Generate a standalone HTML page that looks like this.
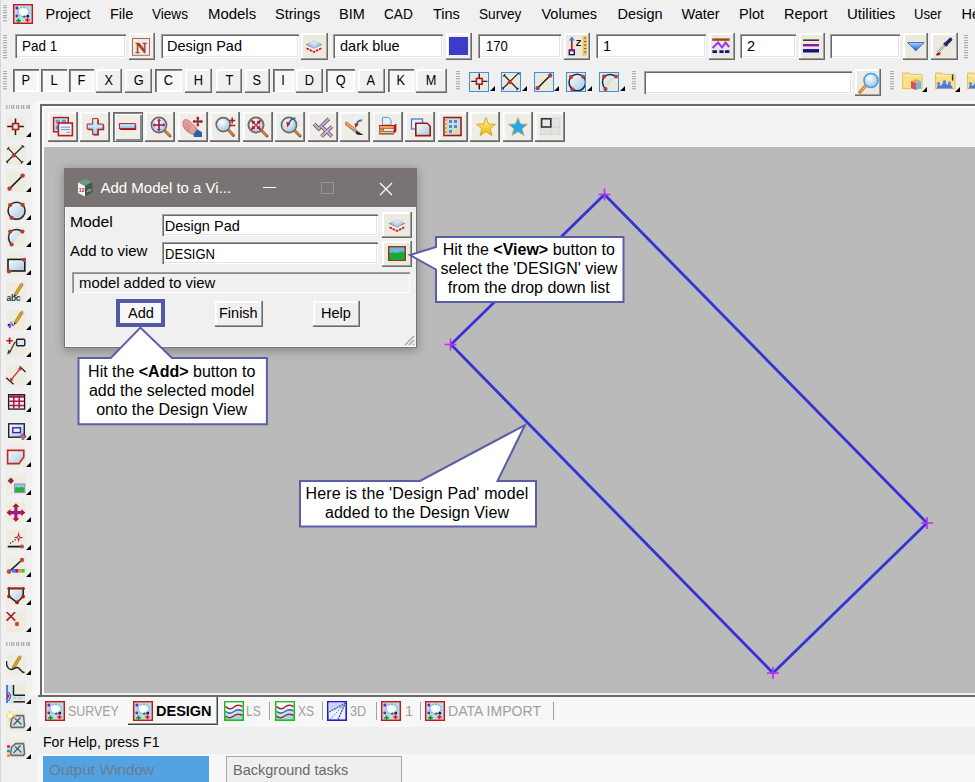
<!DOCTYPE html>
<html><head><meta charset="utf-8">
<style>
*{box-sizing:border-box;}
html,body{margin:0;padding:0;}
body{width:975px;height:782px;overflow:hidden;position:relative;background:#f0f0f0;font-family:"Liberation Sans",sans-serif;color:#000;}
.a{position:absolute;}
.t{position:absolute;white-space:nowrap;font-size:14.5px;line-height:16px;}
.grip{position:absolute;width:4px;background:repeating-linear-gradient(#b0b0b0 0 1px,#dadada 1px 1.5px,transparent 1.5px 2.5px);}
.griph{position:absolute;height:3.5px;background:repeating-linear-gradient(90deg,#b0b0b0 0 1px,#d8d8d8 1px 1.6px,transparent 1.6px 2.5px);}
.inp{position:absolute;background:#fff;box-shadow:inset 1px 1px 0 #a0a0a0,inset 2px 2px 0 #696969,inset -1px -1px 0 #fff,inset -2px -2px 0 #e3e3e3;}
.rb{position:absolute;background:#f0f0f0;box-shadow:inset -1px -1px 0 #696969,inset -2px -2px 0 #a0a0a0,inset 1px 1px 0 #fff,inset 2px 2px 0 #fff;}
.sb{position:absolute;background:#f7f7f7;box-shadow:inset 1px 1px 0 #696969,inset 2px 2px 0 #8a8a8a,inset -1px -1px 0 #fff,inset -2px -2px 0 #fff;}
.lb{font-size:14.5px;line-height:16px;text-align:center;white-space:nowrap;}
.ic{position:absolute;}
.tri{position:absolute;width:0;height:0;border-left:6px solid transparent;border-bottom:6px solid #000;}
.vb{position:absolute;width:30px;height:30px;background:#efede7;box-shadow:inset -1px -1px 0 #696969,inset -2px -2px 0 #8a8a8a,inset 1px 1px 0 #fff,inset 2px 2px 0 #f8f8f8;}
.vb.pressed{box-shadow:inset 0 0 0 1px #6a6a6a,inset 1px 1px 0 1px #8a8a8a,inset 2px 2px 0 1px #fff,inset -2px -2px 0 1px #8a8a8a;}
.co{position:absolute;font-size:16px;line-height:19px;text-align:center;white-space:nowrap;}
</style></head><body>
<svg width="0" height="0" style="position:absolute;left:0;top:0">
<defs>
<linearGradient id="gb" x1="0" y1="0" x2="1" y2="1"><stop offset="0" stop-color="#fbfdff"/><stop offset="1" stop-color="#a8c8dc"/></linearGradient>
<linearGradient id="gb2" x1="0" y1="0" x2="0" y2="1"><stop offset="0" stop-color="#d8f0ff"/><stop offset="1" stop-color="#88c0e8"/></linearGradient>
<linearGradient id="gtri" x1="0" y1="0" x2="0" y2="1"><stop offset="0" stop-color="#a8d0ff"/><stop offset="1" stop-color="#2060d0"/></linearGradient>
<radialGradient id="gmag" cx="0.4" cy="0.35" r="0.7"><stop offset="0" stop-color="#ffffff"/><stop offset="1" stop-color="#98c0dc"/></radialGradient>
<linearGradient id="gstar" x1="0" y1="0" x2="0" y2="1"><stop offset="0" stop-color="#fff3a0"/><stop offset="1" stop-color="#f0b800"/></linearGradient>

<symbol id="app" viewBox="0 0 20 20">
<rect x="0.7" y="0.7" width="18.6" height="18.6" fill="#b8dde4" stroke="#d01414" stroke-width="1.4"/>
<path d="M5 5.5 C7.5 2.5 13 2.5 15.5 5.5 C17 8.5 15 12.5 10.5 12.8 C7 13 4.5 9.5 5 5.5Z" fill="#f4f8fa" stroke="#7ab4dc" stroke-width="1.4" stroke-dasharray="2 0.8"/>
<circle cx="10" cy="8" r="2.5" fill="#fff"/>
<circle cx="3.8" cy="4" r="1.4" fill="#8a1aa0"/>
<circle cx="3.8" cy="12" r="1.4" fill="#8a1aa0"/>
<circle cx="11.3" cy="12.6" r="1.2" fill="#1a7a2a"/>
<circle cx="14.8" cy="12.2" r="1.4" fill="#10188c"/>
<path d="M5.5 14.4v4.6M3.2 16.7h4.6" stroke="#109020" stroke-width="1.6"/>
<path d="M14.5 13.8v4.4M12.3 16h4.4" stroke="#ff1010" stroke-width="1.6"/>
</symbol>

<symbol id="wave" viewBox="0 0 20 20">
<rect x="0.8" y="0.8" width="18.4" height="18.4" fill="#a8d4e4" stroke="#18c018" stroke-width="1.6"/>
<path d="M1.6 1.6 H18.4 V5.5 C15 3.5 12 4 10 6 C8 8 5 8.5 1.6 5.5Z" fill="#fafcff"/>
<path d="M1.6 6 C5 9.5 8 8.5 10 6.5 C12 4.5 15 4 18.4 6.2 V9.6 C15 8 12 8.5 10 10 C8 11.5 5 13 1.6 10.4Z" fill="#eef4fa"/>
<path d="M1.6 11 C5 14 8 12.5 10 11 C12 9.5 15 9 18.4 10.5 V13.5 C15 12.5 12 13 10 14.5 C8 16 5 17.5 1.6 14.5Z" fill="#c8e2f0"/>
<path d="M1.6 5.5 C5 9 8 8 10 6 C12 4 15 3.5 18.4 5.5" fill="none" stroke="#a82828" stroke-width="1.5"/>
<path d="M1.6 10.2 C5 13.5 8 12 10 10.5 C12 9 15 8.2 18.4 9.8" fill="none" stroke="#3a70c0" stroke-width="1.5"/>
<path d="M1.6 15 C5 18 8 16.5 10 14.8 C12 13 15 12.6 18.4 14.2" fill="none" stroke="#a82828" stroke-width="1.5"/>
</symbol>

<symbol id="d3" viewBox="0 0 20 20">
<rect x="0.8" y="0.8" width="18.4" height="18.4" fill="#eef0fb" stroke="#1c1cd0" stroke-width="1.6"/>
<path d="M1.6 1.6H18.4V5L1.6 11Z" fill="#d4d0f4"/>
<path d="M2 11 L18.5 2" stroke="#2a7a9a" stroke-width="1.3" stroke-dasharray="2 0.8"/>
<path d="M3 18.5 L18.5 2" stroke="#3c6a9a" stroke-width="1" stroke-dasharray="1.5 1.5"/>
<path d="M11 18.5 L18.5 2" stroke="#3c3c9a" stroke-width="1.2" stroke-dasharray="2 0.8"/>
</symbol>

<symbol id="cube" viewBox="0 0 16 19">
<path d="M1 4.5 L8.5 1 L15.5 4 L8 8Z" fill="#6a9a80"/>
<path d="M1 4.5 L8 8 L8 18.5 L1 15Z" fill="#f4f4f4"/>
<path d="M8 8 L15.5 4 L15.5 14.5 L8 18.5Z" fill="#3e5e4a"/>
<text x="1.8" y="13.5" font-size="5.5" font-family="Liberation Sans" font-weight="bold" fill="#d02030">12</text>
<path d="M10 14 l2-3 M12 14 l2-3" stroke="#c8e0d0" stroke-width="0.8"/>
</symbol>

<symbol id="layers" viewBox="0 0 20 20">
<path d="M1.5 8.5 L10 5 L18.5 8.5 L10 12.5Z" fill="#7a90a8"/>
<path d="M3.5 8.2 L10 4 L16.5 8.2 L10 12Z" fill="#b8cde6"/>
<path d="M6 7 L10 4.6 L14 7 L10 9.6Z" fill="#d4e2f2"/>
<path d="M2.5 11 L10 14.8 L17.5 11" fill="none" stroke="#f4f8fc" stroke-width="1"/>
<path d="M2.5 12.2 L10 16 L17.5 12.2" fill="none" stroke="#e01414" stroke-width="1.7" stroke-dasharray="2.6 0.9"/>
</symbol>

<symbol id="imgbtn" viewBox="0 0 18 15">
<rect x="0.8" y="0.8" width="16.4" height="13.4" fill="#1cb43c" stroke="#9a3418" stroke-width="1.6"/>
<path d="M1.6 1.6H16.4V6 C12 4 10 8 6 6.5 C4 5.8 3 7 1.6 7.5Z" fill="#6ab8e0"/>
<path d="M1.6 8 C5 6 8 9 12 7 C14 6 15.5 7 16.4 7.5V14H1.6Z" fill="#1aa838"/>
</symbol>
</defs>
</svg>
<svg width="0" height="0" style="position:absolute;left:0;top:0">
<defs>
<symbol id="L_cross" viewBox="0 0 20 20">
<path d="M1.2 9.6H17.8M9.5 1.6V18" stroke="#1e1e1e" stroke-width="1.5"/>
<rect x="6.6" y="6.6" width="5.9" height="5.9" fill="#d6eaf6" stroke="#b41818" stroke-width="1.6"/>
</symbol>
<symbol id="L_xpt" viewBox="0 0 20 20">
<path d="M0.8 17 L17 1.2 M2.2 3.4 L16 17.4" stroke="#2a2a2a" stroke-width="1.3"/>
<path d="M-0.2 15.8 L2 18.2 M15.8 0 L18.2 2.4 M1 4.6 L3.4 2.2 M14.8 18.6 L17.2 16.2" stroke="#2a2a2a" stroke-width="1.1"/>
<circle cx="7.8" cy="10.5" r="2.1" fill="#b83a3a"/>
</symbol>
<symbol id="L_line" viewBox="0 0 20 20">
<path d="M3.6 16.6 L16.6 3.6" stroke="#1e1e1e" stroke-width="1.6"/>
<circle cx="16.6" cy="3.6" r="2.2" fill="#b83a3a"/><circle cx="3.6" cy="16.6" r="2.2" fill="#b83a3a"/>
</symbol>
<symbol id="L_circle" viewBox="0 0 20 20">
<circle cx="10.6" cy="10.8" r="8.5" fill="url(#gb)" stroke="#2a2a2a" stroke-width="1.6"/>
<circle cx="4.2" cy="5" r="2.1" fill="#b83a3a"/><circle cx="16.6" cy="4.8" r="2.1" fill="#b83a3a"/><circle cx="5.6" cy="17.8" r="2.1" fill="#b83a3a"/>
</symbol>
<symbol id="L_arc" viewBox="0 0 20 20">
<path d="M5.6 17.5 C2 14 1.5 8 4.5 5 C7.5 1.5 13 2 16.2 4.6 L5.6 17.5Z" fill="url(#gb)"/>
<path d="M5.6 17.5 C2 14 1.5 8 4.5 5 C7.5 1.5 13 2 16.2 4.6" fill="none" stroke="#2a2a2a" stroke-width="1.6"/>
<circle cx="4.2" cy="4.6" r="2.1" fill="#b83a3a"/><circle cx="16.4" cy="4.6" r="2.1" fill="#b83a3a"/><circle cx="5.6" cy="17.5" r="2.1" fill="#b83a3a"/>
</symbol>
<symbol id="L_rect" viewBox="0 0 20 20">
<rect x="2" y="4.4" width="16.8" height="11.6" fill="url(#gb)" stroke="#1e1e1e" stroke-width="1.6"/>
<circle cx="18.3" cy="4.9" r="2.1" fill="#b83a3a"/><circle cx="2.9" cy="16.4" r="2.1" fill="#b83a3a"/>
</symbol>
<symbol id="L_abc" viewBox="0 0 20 20">
<path d="M8 12.5 L14.5 2 L17 3.2 L10.3 13.5Z" fill="#e0a818" stroke="#806010" stroke-width="0.6"/>
<path d="M14.5 2 L15.3 0.6 L17.8 1.8 L17 3.2Z" fill="#e88890"/>
<path d="M8 12.5 L10.3 13.5 L7.8 15Z" fill="#303030"/>
<text x="0.6" y="19" font-size="8.6" font-family="Liberation Sans" font-weight="bold" fill="#283c5a" letter-spacing="-0.4">abc</text>
</symbol>
<symbol id="L_paint" viewBox="0 0 20 20">
<path d="M8 12.5 L14.5 2 L17 3.2 L10.3 13.5Z" fill="#e0a818" stroke="#806010" stroke-width="0.6"/>
<path d="M14.5 2 L15.3 0.6 L17.8 1.8 L17 3.2Z" fill="#e88890"/>
<path d="M8 12.5 L10.3 13.5 L7.8 15Z" fill="#303030"/>
<path d="M4.5 14 C3 11.5 6 10.5 6.8 12.8Z" fill="#40a8f0"/>
<path d="M4.5 14 C1.5 13 0.5 16 3 16.5Z" fill="#1a1ab0"/>
<path d="M4.5 14 C6 16.5 4 19.5 2.8 17.2Z" fill="#a020c0"/>
<path d="M4.5 14 C7 13 9 15.5 7 16.5Z" fill="#9040f0"/>
</symbol>
<symbol id="L_plusbox" viewBox="0 0 20 20">
<path d="M3.6 0.6V7M0.4 3.8H6.8" stroke="#b01830" stroke-width="1.6"/>
<rect x="10.6" y="2.2" width="8.2" height="6.6" rx="1" fill="#d6eaf6" stroke="#222" stroke-width="1.4"/>
<path d="M10.6 5.4H8.8 L3 16.5" fill="none" stroke="#444" stroke-width="1.4"/>
<path d="M1.2 17.8 L2.2 12.8 L5.4 14.6Z" fill="#444"/>
</symbol>
<symbol id="L_ruler" viewBox="0 0 20 20">
<path d="M0.2 12.8 L7.6 19.2 M13.6 1.4 L19.6 7" stroke="#2a2a2a" stroke-width="1.4"/>
<path d="M4.6 15.4 L14.8 3" stroke="#d02a3a" stroke-width="1.2"/>
<path d="M3.8 16.4 L4.4 12.6 L7.4 15.2Z M15.6 2 L15 5.8 L12 3.2Z" fill="#d02a3a"/>
</symbol>
<symbol id="L_table" viewBox="0 0 20 20">
<rect x="2.6" y="2.7" width="16" height="14.4" fill="#e8eef4" stroke="#1a1a1a" stroke-width="1.3"/>
<path d="M3.3 5H18M3.3 9.3H18M3.3 13.4H18M7.8 3.4V16.4M13.2 3.4V16.4" stroke="#b01830" stroke-width="1.5"/>
<rect x="3.3" y="3.4" width="14.7" height="1.6" fill="#b01830"/>
</symbol>
<symbol id="L_winmag" viewBox="0 0 20 20">
<rect x="2.7" y="3.8" width="15.6" height="13.4" fill="url(#gb)" stroke="#222" stroke-width="1.4"/>
<rect x="6.8" y="7.8" width="7.6" height="4.8" fill="#f0f4f8" stroke="#2828c0" stroke-width="1.4"/>
<path d="M17 13.5V19.8M13.8 16.6H20.2" stroke="#c82828" stroke-width="2.6"/>
<path d="M17 14.2V19M14.5 16.6H19.4" stroke="#40a0f0" stroke-width="1.3"/>
</symbol>
<symbol id="L_shape" viewBox="0 0 20 20">
<path d="M1.6 3.4 H17.8 V10 L13 16.6 H1.6Z" fill="url(#gb)" stroke="#c02828" stroke-width="1.6"/>
</symbol>
<symbol id="L_imgpt" viewBox="0 0 20 20">
<path d="M4.8 2.5 L8 5.7 L4.8 8.9 L1.6 5.7Z" fill="#c01818"/>
<rect x="4" y="4" width="1.6" height="3.6" fill="#2050a0"/>
<rect x="8.6" y="9" width="10.2" height="8.6" fill="#8cc8f0" stroke="#8a8ad8" stroke-width="1"/>
<path d="M9.1 16.9V13 C11 11 12 13 13.5 12.5 C15 12 16 11.5 18.3 13 V16.9Z" fill="#30b030"/>
</symbol>
<symbol id="L_move" viewBox="0 0 20 20">
<path d="M9.9 1.2 L13.4 5 H11.4 V9 H15.4 V7 L19.2 10.6 L15.4 14.2 V12.2 H11.4 V16.2 H13.4 L9.9 19.8 L6.4 16.2 H8.4 V12.2 H4.4 V14.2 L0.6 10.6 L4.4 7 V9 H8.4 V5 H6.4Z" fill="#b80e20"/>
<path d="M9.9 4.5V16.8M3.6 10.6H16.2" stroke="#9020a0" stroke-width="2"/>
</symbol>
<symbol id="L_stake" viewBox="0 0 20 20">
<path d="M12.6 1.6 L13.6 6.4 L17.6 7.4 L13.6 8.4 L12.6 12.6 L11.6 8.4 L7.8 7.4 L11.6 6.4Z" fill="#b81a2a"/>
<circle cx="12.6" cy="7.4" r="1" fill="#f0e0d0"/>
<path d="M9.6 9.6 L3.2 14" stroke="#333" stroke-width="1.3" stroke-dasharray="1.2 1.6"/>
<path d="M1.8 16.6 H16" stroke="#1e1e1e" stroke-width="1.8"/>
<circle cx="16" cy="16.6" r="2" fill="#b84a4a"/>
</symbol>
<symbol id="L_cline" viewBox="0 0 20 20">
<path d="M3.6 14.2 L16 3" stroke="#1e1e1e" stroke-width="1.6"/>
<circle cx="16" cy="3" r="2.2" fill="#b84a4a"/><circle cx="3" cy="14.6" r="2.3" fill="#b84a4a"/>
<rect x="6" y="12" width="3.2" height="3.6" fill="#1e90ff"/><rect x="9.2" y="12" width="3.2" height="3.6" fill="#8a18a0"/><rect x="12.4" y="12" width="3.2" height="3.6" fill="#ff8030"/><rect x="15.6" y="12" width="3" height="3.6" fill="#18e018"/>
</symbol>
<symbol id="L_shield" viewBox="0 0 20 20">
<path d="M3 3.5 H17.2 V11.5 L11 17.6 L3 11.4Z" fill="url(#gb)" stroke="#1e1e1e" stroke-width="1.5"/>
<path d="M2.2 3.4 H18" stroke="#b01818" stroke-width="1.8"/>
<circle cx="3" cy="11.4" r="1.8" fill="#b01818"/><circle cx="17.2" cy="11.6" r="1.8" fill="#b01818"/><circle cx="11" cy="17.4" r="1.9" fill="#b01818"/>
<circle cx="2.8" cy="3.4" r="1.5" fill="#b01818"/><circle cx="17.4" cy="3.4" r="1.5" fill="#b01818"/>
</symbol>
<symbol id="L_xpt2" viewBox="0 0 20 20">
<path d="M0.6 0 L9.2 8.6 M9.2 0 L0.6 8.6" stroke="#b01830" stroke-width="1.6"/>
<circle cx="11" cy="12" r="2.2" fill="#c84a4a"/>
</symbol>
<symbol id="L_pwave" viewBox="0 0 20 20">
<path d="M6 12.5 L12.5 1.8 L15 3 L8.3 13.6Z" fill="#e0a818" stroke="#806010" stroke-width="0.6"/>
<path d="M12.5 1.8 L13.4 0.3 L15.9 1.5 L15 3Z" fill="#e88890"/>
<path d="M0.5 6 C0 10 2 14.5 5 14.5 C8 14.5 9 12 11.5 12.5 C14 13 15 17.5 18.5 17.5" fill="none" stroke="#222" stroke-width="1.5"/>
</symbol>
<symbol id="L_kerb" viewBox="0 0 20 20">
<rect x="1" y="1" width="6" height="18" fill="#cfe6f0"/>
<path d="M1 1 V19" stroke="#3060e0" stroke-width="1.6"/>
<path d="M1 9 L4 12 L1 15Z" fill="#f01818"/>
<path d="M2.5 8 L5 12 L2.5 17" fill="none" stroke="#3060e0" stroke-width="1.2"/>
<rect x="5" y="12" width="14" height="4" fill="#cfe6f0"/>
<path d="M7.5 1 V10.5 C7.5 11 8 11.2 9 11.2 H19" fill="none" stroke="#1e1e1e" stroke-width="1.5"/>
<path d="M7.5 17.8 H19" stroke="#1e1e1e" stroke-width="1.5"/>
<path d="M7.5 14 H10 M13 14 H15.5" stroke="#9ab0c0" stroke-width="1"/>
</symbol>
<symbol id="L_tin" viewBox="0 0 20 20">
<path d="M5.6 8 L9.6 4.6 H17.5 L18.6 14.8 L17.4 16.4 H5.4 L4.6 14.6Z" fill="#c8e0ea" stroke="#6a6a6a" stroke-width="1.6"/>
<path d="M7.5 14 L14.5 6.5 M9 7.5 L15.5 13.5" stroke="#555" stroke-width="1.2"/>
</symbol>
</defs>
</svg>
<svg width="0" height="0" style="position:absolute;left:0;top:0">
<defs>
<symbol id="V_grid" viewBox="0 0 22 22">
<rect x="1.6" y="1.6" width="14.6" height="14.2" fill="#d8eaf8" stroke="#b81c1c" stroke-width="1.5"/>
<rect x="3.6" y="3.6" width="4.4" height="4.2" fill="#6898d0"/><rect x="9.6" y="3.6" width="4.4" height="4.2" fill="#6898d0"/><rect x="3.6" y="9.4" width="4.4" height="4.2" fill="#6898d0"/>
<rect x="6.4" y="7" width="14" height="12.6" fill="#e6f2fa" stroke="#b81c1c" stroke-width="1.6"/>
<path d="M8.8 11.2H18M8.8 13.6H18M14.5 16.4H18" stroke="#6890b8" stroke-width="0.9"/>
</symbol>
<symbol id="V_plus" viewBox="0 0 22 22">
<path d="M7.6 2.6H12.8V8H18.2V13.2H12.8V18.6H7.6V13.2H2.2V8H7.6Z" fill="#a01010" transform="translate(1,1)"/>
<path d="M7.6 2.6H12.8V8H18.2V13.2H12.8V18.6H7.6V13.2H2.2V8H7.6Z" fill="url(#gb2)" stroke="#b82020" stroke-width="1"/>
<path d="M10.2 4V17M3.6 10.6H16.8" stroke="#e8f6ff" stroke-width="1" opacity="0.7"/>
</symbol>
<symbol id="V_minus" viewBox="0 0 22 22">
<rect x="3.2" y="8.4" width="16" height="5.6" fill="#a01010"/>
<rect x="2.4" y="7.6" width="15.8" height="5" fill="url(#gb2)" stroke="#b82020" stroke-width="1"/>
</symbol>
<symbol id="V_zmove" viewBox="0 0 22 22">
<path d="M13.5 13.5 L20 20" stroke="#8a4818" stroke-width="2.8" stroke-linecap="round"/>
<path d="M14 14 L19.5 19.5" stroke="#e0903a" stroke-width="1.4" stroke-linecap="round"/>
<circle cx="9" cy="9" r="7.6" fill="url(#gmag)" stroke="#6a6a6a" stroke-width="1.6"/>
<path d="M9 3.2V14.8M3.2 9H14.8" stroke="#a8102a" stroke-width="1.6"/>
<path d="M9 2.6L11 5H7Z M9 15.4L11 13H7Z M2.6 9L5 7V11Z M15.4 9L13 7V11Z" fill="#a8208a"/>
</symbol>
<symbol id="V_hand" viewBox="0 0 22 22">
<path d="M1 6 C1.5 3.5 4 3 6.5 4.5 C9 6 11.5 9 14 11.5 L15.5 14 L12 18.5 C8.5 18 4.5 15.5 2.5 12.5 C1.2 10.5 0.7 8 1 6Z" fill="#e4a0a0" stroke="#b87070" stroke-width="0.9"/>
<path d="M3.5 7.5 L9 11 M2.5 10 L8 13 M4 13 L8.5 15" stroke="#c07878" stroke-width="0.8"/>
<path d="M11.5 18 L15.2 13.2 L20 16.2 V21 H11.8Z" fill="#2a62a8"/>
<path d="M15.8 1V10M11.3 5.5H20.3" stroke="#b01828" stroke-width="1.8"/>
<path d="M15.8 0.2L17.6 2.6H14Z M15.8 10.8L17.6 8.4H14Z M10.5 5.5L12.9 3.7V7.3Z M21.1 5.5L18.7 3.7V7.3Z" fill="#b01828"/>
<circle cx="15.8" cy="5.5" r="1.2" fill="#206a8a"/>
</symbol>
<symbol id="V_zplus" viewBox="0 0 22 22">
<path d="M12.5 13 L18.5 19.5" stroke="#8a4818" stroke-width="2.8" stroke-linecap="round"/>
<path d="M13 13.5 L18 19" stroke="#e0903a" stroke-width="1.4" stroke-linecap="round"/>
<circle cx="8.2" cy="8.6" r="7" fill="url(#gmag)" stroke="#6a6a6a" stroke-width="1.6"/>
<path d="M17.2 1.5V7.5M14.2 4.5H20.2M14.2 9.6H20.2" stroke="#b01828" stroke-width="1.5"/>
</symbol>
<symbol id="V_zred" viewBox="0 0 22 22">
<path d="M13.5 13.5 L20 20" stroke="#8a4818" stroke-width="2.8" stroke-linecap="round"/>
<path d="M14 14 L19.5 19.5" stroke="#e0903a" stroke-width="1.4" stroke-linecap="round"/>
<circle cx="9" cy="9" r="7.6" fill="url(#gmag)" stroke="#6a6a6a" stroke-width="1.8"/>
<path d="M4 4 L8.4 5.6 L5.6 8.4Z M14 4 L9.6 5.6 L12.4 8.4Z M4 14 L8.4 12.4 L5.6 9.6Z M14 14 L9.6 12.4 L12.4 9.6Z" fill="#c81818"/>
<path d="M4.6 4.6L8 8M13.4 4.6L10 8M4.6 13.4L8 10M13.4 13.4L10 10" stroke="#c81818" stroke-width="1.8"/>
<circle cx="9" cy="9" r="0.9" fill="#222"/>
</symbol>
<symbol id="V_zarrow" viewBox="0 0 22 22">
<path d="M13.5 13.5 L20 20" stroke="#8a4818" stroke-width="2.8" stroke-linecap="round"/>
<path d="M14 14 L19.5 19.5" stroke="#e0903a" stroke-width="1.4" stroke-linecap="round"/>
<circle cx="9" cy="9" r="7.6" fill="url(#gmag)" stroke="#6a6a6a" stroke-width="1.6"/>
<path d="M8.5 9.5 C9 5 12 2.5 15.5 2" fill="none" stroke="#2a5a9a" stroke-width="1.6"/>
<path d="M6.2 5.6 L10.2 7.2 L7.2 11.6Z" fill="#c81818"/>
</symbol>
<symbol id="V_cross" viewBox="0 0 22 22">
<path d="M2 8 L6.8 12.8 L16.8 2.8" fill="none" stroke="#c02020" stroke-width="3.6" stroke-linejoin="miter"/>
<path d="M2 8 L6.8 12.8 L16.8 2.8" fill="none" stroke="#8ccaf2" stroke-width="2"/>
<path d="M9.5 10.5 L20 20.5 M20 10.5 L9.5 20.5" stroke="#c02020" stroke-width="3.6"/>
<path d="M9.5 10.5 L20 20.5 M20 10.5 L9.5 20.5" stroke="#8ccaf2" stroke-width="2"/>
</symbol>
<symbol id="V_brush" viewBox="0 0 22 22">
<path d="M1.5 7.5 L9.5 14" stroke="#c8804a" stroke-width="3.6" stroke-linecap="round"/>
<path d="M1.5 7 L9 13" stroke="#f0b070" stroke-width="1.2" stroke-linecap="round"/>
<path d="M9 13.5 L12 16" stroke="#9aa4ac" stroke-width="3.4"/>
<path d="M11 15 C13 15 15 17 18.5 18.8 C15 19.5 12.5 19 10.8 17.5Z" fill="#2a2a2a"/>
<path d="M11.8 8.5 C12 6 14 4.5 17 4.2" fill="none" stroke="#3a7ac0" stroke-width="2"/>
<path d="M9.4 7.2 L13.6 8.2 L10.4 12Z" fill="#c81818"/>
</symbol>
<symbol id="V_print" viewBox="0 0 22 22">
<path d="M5.5 1.4 H11.5 L14 3.8 V9 H5.5Z" fill="#e4f2ff" stroke="#5a9ae0" stroke-width="1"/>
<path d="M2 9 H17 L19.4 7.4 V15.4 L17 17.6 H2Z" fill="#b81c1c"/>
<rect x="2.6" y="10" width="14" height="2" fill="#f0a050"/>
<rect x="2.6" y="12.6" width="14" height="2.4" fill="#d8eef4"/>
<rect x="3" y="13" width="2" height="1.6" fill="#18c018"/><rect x="5.5" y="13" width="1.5" height="1.6" fill="#e01818"/>
<rect x="2.6" y="15.6" width="14" height="1.4" fill="#f0d050"/>
<path d="M2 18 H17" stroke="#3a3a3a" stroke-width="0.9"/>
</symbol>
<symbol id="V_windows" viewBox="0 0 22 22">
<rect x="1.5" y="3" width="11" height="10" fill="#e8f2fa" stroke="#3a78d0" stroke-width="1.2"/>
<path d="M5.8 7.2 H17 L20.2 10.4 V19.6 H5.8Z" fill="url(#gb)" stroke="#a01818" stroke-width="1.6"/>
<circle cx="17.4" cy="9.6" r="0.9" fill="#fff"/>
</symbol>
<symbol id="V_gridbook" viewBox="0 0 22 22">
<rect x="2" y="1.5" width="17" height="18" fill="#c8dcec" stroke="#a01818" stroke-width="1.6"/>
<rect x="2.8" y="2.3" width="2.6" height="16.4" fill="#e8d890"/>
<rect x="7" y="4" width="3" height="3" fill="#5a88b0"/><rect x="12" y="4" width="3" height="3" fill="#5a88b0"/>
<rect x="7" y="9" width="3" height="3" fill="#5a88b0"/><rect x="12" y="9" width="3" height="3" fill="#5a88b0"/>
<rect x="7" y="14" width="3" height="3" fill="#5a88b0"/><rect x="12" y="14" width="3.4" height="3.4" fill="#f0e040"/>
<path d="M3.4 4H4.8M3.4 8H4.8M3.4 12H4.8M3.4 16H4.8" stroke="#5a5a20" stroke-width="0.9"/>
</symbol>
<symbol id="V_star" viewBox="0 0 22 22">
<path d="M11 1.5 L13.6 8 L20.5 8.3 L15.2 12.7 L17 19.6 L11 15.8 L5 19.6 L6.8 12.7 L1.5 8.3 L8.4 8Z" fill="url(#gstar)" stroke="#d8a020" stroke-width="0.9" stroke-linejoin="round"/>
</symbol>
<symbol id="V_bstar" viewBox="0 0 22 22">
<path d="M11 1.5 L13.6 8 L20.5 8.3 L15.2 12.7 L17 19.6 L11 15.8 L5 19.6 L6.8 12.7 L1.5 8.3 L8.4 8Z" fill="#20a8e8" stroke="#d8b060" stroke-width="0.9" stroke-linejoin="round"/>
</symbol>
<symbol id="V_wgrid" viewBox="0 0 22 22">
<rect x="0.8" y="2" width="19.2" height="16.6" fill="#e2e2e2" stroke="#cfcfcf" stroke-width="0.8"/>
<path d="M11 2V18.6M0.8 11.2H20" stroke="#cfcfcf" stroke-width="0.8"/>
<rect x="1.6" y="2.8" width="9.2" height="8.2" fill="#e6e6e6" stroke="#363636" stroke-width="1.6"/>
</symbol>

<symbol id="R_N" viewBox="0 0 18 18">
<rect x="0.5" y="0.5" width="17" height="16.8" fill="#e2eff6" stroke="#c8643a" stroke-width="1"/>
<text x="9" y="15" font-size="15.5" font-family="Liberation Serif" font-weight="bold" fill="#b03c10" stroke="#b03c10" stroke-width="0.5" text-anchor="middle">N</text>
</symbol>
<symbol id="R_z" viewBox="0 0 22 22">
<path d="M5.8 17 V5" stroke="#b81818" stroke-width="1.6"/>
<path d="M5.8 1.2 L8.6 5.6 H3Z" fill="#3a7ad0"/>
<rect x="3.3" y="15" width="5" height="4.6" fill="#fff" stroke="#10108a" stroke-width="1.4"/>
<path d="M3.3 15 H8.3 V16.5 H3.3Z" fill="#c02020"/>
<text x="9.8" y="10.5" font-size="9" font-family="Liberation Sans" font-weight="bold" fill="#111">Z</text>
<rect x="16.4" y="1" width="4.4" height="19.6" fill="#f0c860"/>
<path d="M18 3H20.4M18 6.5H20.4M18 10H20.4M18 13.5H20.4M18 17H20.4" stroke="#6a5a20" stroke-width="0.9"/>
</symbol>
<symbol id="R_contour" viewBox="0 0 22 22">
<rect x="1.2" y="3.4" width="17.4" height="2.4" fill="#a04808"/>
<path d="M1.6 13 L7 7.6 L11 12.4 L14.6 7.6 L18.2 12" fill="none" stroke="#a030f0" stroke-width="2"/>
<path d="M1.4 16.6H6M8.4 16.6H12.6M14 16.6H18.4" stroke="#10108a" stroke-width="2.6"/>
</symbol>
<symbol id="R_lines" viewBox="0 0 22 22">
<path d="M2 5.2H18" stroke="#3a3a3a" stroke-width="1.6"/>
<path d="M2 10.2H18" stroke="#9018a0" stroke-width="2.4"/>
<path d="M2 15.8H18" stroke="#10108a" stroke-width="3.4"/>
</symbol>
<symbol id="R_drop" viewBox="0 0 22 22">
<path d="M3.5 6.5 H20.2 L11.8 14.8Z" fill="url(#gtri)" stroke="#2a5aa8" stroke-width="0.8"/>
</symbol>
<symbol id="R_eye" viewBox="0 0 22 22">
<path d="M5 17.5 C3 18.5 2 20.5 4.5 20.5 C7 20.5 8 19 7.5 17.5Z" fill="#b01818"/>
<path d="M4.5 17.5 L12.5 9.5" stroke="#888" stroke-width="2.2"/>
<path d="M4.5 17.5 L12.5 9.5" stroke="#f0f0f0" stroke-width="1"/>
<path d="M11 8 L14 11" stroke="#222" stroke-width="2.4"/>
<path d="M13 9 L17.5 4.5" stroke="#1a2a6a" stroke-width="3.6" stroke-linecap="round"/>
</symbol>
<symbol id="R_mag" viewBox="0 0 24 24">
<path d="M3 21 L9 14.5" stroke="#d86a18" stroke-width="3.2" stroke-linecap="round"/>
<path d="M3.6 20.4 L8.6 15" stroke="#f8b070" stroke-width="1.2" stroke-linecap="round"/>
<circle cx="14" cy="9.5" r="7" fill="url(#gmag)" stroke="#3aa0f0" stroke-width="1.6"/>
</symbol>
<symbol id="R_folder1" viewBox="0 0 22 22">
<path d="M0.6 1 H7 L8.5 2.4 H20 V16.6 H0.6Z" fill="#fbe08a" stroke="#e8c050" stroke-width="1"/>
<path d="M1.2 3.6 H19.4" stroke="#fff2c0" stroke-width="1"/>
<path d="M9 9 L14 7 L19 9 L14 11Z" fill="#e8a860"/>
<path d="M9 9 L14 11 V18 L9 16Z" fill="#d85050"/>
<path d="M14 11 L19 9 V16 L14 18Z" fill="#6ab8e8"/>
</symbol>
<symbol id="R_folder2" viewBox="0 0 22 22">
<path d="M0.6 1 H7 L8.5 2.4 H20 V16.6 H0.6Z" fill="#fbe08a" stroke="#e8c050" stroke-width="1"/>
<path d="M1.2 3.6 H19.4" stroke="#fff2c0" stroke-width="1"/>
<path d="M17.6 2.5 V8.6" stroke="#333" stroke-width="1.5"/>
<path d="M1.5 16.5 L3.5 11.5 L5.5 14 L9.5 9.5 L12.5 13 L14.5 10.5 L18 16.5Z" fill="#4a7ae0"/>
<circle cx="3.5" cy="11.5" r="1.6" fill="#5a8af0"/><circle cx="9.5" cy="9.8" r="1.8" fill="#5a8af0"/><circle cx="14.5" cy="10.8" r="1.6" fill="#5a8af0"/>
</symbol>
<symbol id="S_cross" viewBox="0 0 20 20">
<path d="M2.2 9.6H16.6M9.4 2.2V17" stroke="#333" stroke-width="1.5"/>
<rect x="6.6" y="6.8" width="5.6" height="5.6" fill="#d6eaf6" stroke="#b41818" stroke-width="1.5"/>
</symbol>
<symbol id="S_xpt" viewBox="0 0 20 20">
<path d="M2.5 16.5 L16.5 2.5 M2.5 2.5 L16.5 16.5" stroke="#333" stroke-width="1.2"/>
<circle cx="9.5" cy="9.6" r="2.2" fill="#b84a4a"/>
</symbol>
<symbol id="S_line" viewBox="0 0 20 20">
<path d="M4.5 14.5 L14.5 4.5" stroke="#222" stroke-width="1.5"/>
<circle cx="14.5" cy="4.5" r="2" fill="#b84a4a"/><circle cx="4.5" cy="14.5" r="2" fill="#b84a4a"/>
</symbol>
<symbol id="S_circle" viewBox="0 0 20 20">
<circle cx="9.8" cy="10" r="7.8" fill="url(#gb)" stroke="#222" stroke-width="1.5"/>
<circle cx="4.6" cy="4.6" r="2" fill="#b84a4a"/><circle cx="15" cy="4.4" r="2" fill="#b84a4a"/><circle cx="5" cy="15.4" r="2" fill="#b84a4a"/>
</symbol>
<symbol id="S_arc" viewBox="0 0 20 20">
<path d="M5 15.5 C2 12 2.5 7 5 4.6 C8 2 12 2.5 15 4.4 Z" fill="url(#gb)"/>
<path d="M5 15.5 C2 12 2.5 7 5 4.6 C8 2 12 2.5 15 4.4" fill="none" stroke="#222" stroke-width="1.5"/>
<circle cx="4.6" cy="4.6" r="2" fill="#b84a4a"/><circle cx="15" cy="4.4" r="2" fill="#b84a4a"/><circle cx="5" cy="15.4" r="2" fill="#b84a4a"/>
</symbol>
</defs>
</svg>

<!-- left window edge -->
<div class="a" style="left:0;top:0;width:1px;height:782px;background:#d6d6d6"></div>

<!-- ============ MENU BAR ============ -->
<div class="grip" style="left:3px;top:5px;height:17px"></div>
<div class="t" style="left:45.5px;top:6px">Project</div>
<div class="t" style="left:110px;top:6px">File</div>
<div class="t" style="left:152px;top:6px;transform:scaleX(0.935);transform-origin:0 0">Views</div>
<div class="t" style="left:207.5px;top:6px;transform:scaleX(1.03);transform-origin:0 0">Models</div>
<div class="t" style="left:275px;top:6px">Strings</div>
<div class="t" style="left:339px;top:6px">BIM</div>
<div class="t" style="left:384px;top:6px;transform:scaleX(0.94);transform-origin:0 0">CAD</div>
<div class="t" style="left:433px;top:6px">Tins</div>
<div class="t" style="left:479px;top:6px;transform:scaleX(0.94);transform-origin:0 0">Survey</div>
<div class="t" style="left:541.5px;top:6px">Volumes</div>
<div class="t" style="left:617.5px;top:6px">Design</div>
<div class="t" style="left:681.5px;top:6px">Water</div>
<div class="t" style="left:739px;top:6px">Plot</div>
<div class="t" style="left:784px;top:6px">Report</div>
<div class="t" style="left:846.5px;top:6px;transform:scaleX(1.035);transform-origin:0 0">Utilities</div>
<div class="t" style="left:914px;top:6px;transform:scaleX(0.9);transform-origin:0 0">User</div>
<div class="t" style="left:961.5px;top:6px">Help</div>

<!-- ============ ROW 2 ============ -->
<div class="grip" style="left:3px;top:35px;height:24px"></div>
<div class="inp" style="left:15px;top:34px;width:111px;height:24px"></div>
<div class="t" style="left:21.8px;top:38px;transform:scaleX(0.93);transform-origin:0 0">Pad 1</div>
<div class="rb" style="left:129px;top:33px;width:26px;height:27px"></div>
<div class="inp" style="left:160.5px;top:34px;width:138px;height:24px"></div>
<div class="t" style="left:167px;top:38px">Design Pad</div>
<div class="rb" style="left:301px;top:33px;width:26.5px;height:27px;background:#ece9df"></div>
<div class="inp" style="left:333px;top:34px;width:110px;height:24px"></div>
<div class="t" style="left:340px;top:38px">dark blue</div>
<div class="rb" style="left:446px;top:33px;width:26px;height:27px"></div>
<div class="a" style="left:448.5px;top:36.5px;width:19px;height:18.5px;background:#3c3cc8"></div>
<div class="inp" style="left:478px;top:34px;width:83px;height:24px"></div>
<div class="t" style="left:485.5px;top:38px;transform:scaleX(0.9);transform-origin:0 0">170</div>
<div class="rb" style="left:564px;top:33px;width:26px;height:27px;background:#ece9df"></div>
<div class="inp" style="left:595.5px;top:34px;width:110px;height:24px"></div>
<div class="t" style="left:603px;top:38px">1</div>
<div class="rb" style="left:709px;top:33px;width:26px;height:27px;background:#ece9df"></div>
<div class="inp" style="left:740px;top:34px;width:56px;height:24px"></div>
<div class="t" style="left:747px;top:38px">2</div>
<div class="rb" style="left:798.5px;top:33px;width:26.5px;height:27px;background:#ece9df"></div>
<div class="inp" style="left:830px;top:34px;width:70px;height:24px"></div>
<div class="rb" style="left:903px;top:33px;width:25px;height:27px;background:#ece9df"></div>
<div class="rb" style="left:931px;top:33px;width:26.5px;height:27px;background:#ece9df"></div>
<div class="grip" style="left:964px;top:35px;height:24px"></div>

<!-- ============ ROW 3 ============ -->
<div class="grip" style="left:3px;top:71px;height:20px"></div>
<div class="sb lb" style="left:12.5px;top:69px;width:26.5px;height:23px;padding-top:2.5px"><span style="display:inline-block;transform:scaleX(0.88)">P</span></div>
<div class="sb lb" style="left:41px;top:69px;width:26px;height:23px;padding-top:2.5px"><span style="display:inline-block;transform:scaleX(0.88)">L</span></div>
<div class="sb lb" style="left:69px;top:69px;width:25px;height:23px;padding-top:2.5px"><span style="display:inline-block;transform:scaleX(0.88)">F</span></div>
<div class="rb lb" style="left:96px;top:69px;width:26px;height:23.5px;padding-top:2.5px"><span style="display:inline-block;transform:scaleX(0.88)">X</span></div>
<div class="rb lb" style="left:125px;top:69px;width:26.5px;height:23.5px;padding-top:2.5px"><span style="display:inline-block;transform:scaleX(0.88)">G</span></div>
<div class="sb lb" style="left:155px;top:69px;width:27px;height:23px;padding-top:2.5px"><span style="display:inline-block;transform:scaleX(0.88)">C</span></div>
<div class="rb lb" style="left:185px;top:69px;width:27px;height:23.5px;padding-top:2.5px"><span style="display:inline-block;transform:scaleX(0.88)">H</span></div>
<div class="rb lb" style="left:216px;top:69px;width:26px;height:23.5px;padding-top:2.5px"><span style="display:inline-block;transform:scaleX(0.88)">T</span></div>
<div class="rb lb" style="left:245px;top:69px;width:24.5px;height:23.5px;padding-top:2.5px"><span style="display:inline-block;transform:scaleX(0.88)">S</span></div>
<div class="sb lb" style="left:272.5px;top:69px;width:21px;height:23px;padding-top:2.5px"><span style="display:inline-block;transform:scaleX(0.88)">I</span></div>
<div class="rb lb" style="left:296px;top:69px;width:26.5px;height:23.5px;padding-top:2.5px"><span style="display:inline-block;transform:scaleX(0.88)">D</span></div>
<div class="sb lb" style="left:326px;top:69px;width:29px;height:23px;padding-top:2.5px"><span style="display:inline-block;transform:scaleX(0.88)">Q</span></div>
<div class="rb lb" style="left:357.5px;top:69px;width:27px;height:23.5px;padding-top:2.5px"><span style="display:inline-block;transform:scaleX(0.88)">A</span></div>
<div class="sb lb" style="left:387.5px;top:69px;width:26px;height:23px;padding-top:2.5px"><span style="display:inline-block;transform:scaleX(0.88)">K</span></div>
<div class="rb lb" style="left:416px;top:69px;width:31px;height:23.5px;padding-top:2.5px"><span style="display:inline-block;transform:scaleX(0.88)">M</span></div>
<div class="grip" style="left:456px;top:71px;height:19px"></div>
<div class="grip" style="left:632px;top:71px;height:19px"></div>
<div class="inp" style="left:644px;top:70.5px;width:208px;height:23.5px"></div>
<div class="rb" style="left:855px;top:69px;width:26px;height:27px;background:#ece9df"></div>
<div class="grip" style="left:890px;top:71px;height:20px"></div>

<!-- ============ LEFT TOOLBAR ============ -->
<div class="griph" style="left:6px;top:105px;width:24px"></div>
<div class="griph" style="left:6px;top:642px;width:24px"></div>

<!-- ============ VIEW FRAME ============ -->
<div class="a" style="left:38px;top:101px;width:937px;height:2px;background:#fafafa"></div>
<div class="a" style="left:32px;top:103px;width:8px;height:592px;background:#f6f6f6"></div>
<div class="a" style="left:37px;top:101px;width:2.5px;height:594px;background:#fafafa"></div>
<div class="a" style="left:40px;top:104px;width:935px;height:2px;background:#6a6a6a"></div>
<div class="a" style="left:40px;top:104px;width:2px;height:591px;background:#6a6a6a"></div>
<div class="a" style="left:42px;top:106px;width:933px;height:589px;background:#f2f2f2;border-top:2px solid #fff;border-left:2px solid #fff"></div>
<div class="a" style="left:44px;top:146.5px;width:931px;height:546.5px;background:#bababa"></div>
<div class="a" style="left:38px;top:695px;width:937px;height:2px;background:#6a6a6a"></div>

<!-- view toolbar buttons -->
<div class="a" style="left:6px;top:117px;width:20px;height:20px;background:#eeebdf"></div>
<svg class="ic" style="left:6px;top:117px" width="20" height="20"><use href="#L_cross"/></svg>
<div class="tri" style="left:26px;top:132px;border-left-width:5px;border-bottom-width:5px"></div>
<div class="a" style="left:6px;top:144.5px;width:20px;height:20px;background:#eeebdf"></div>
<svg class="ic" style="left:6px;top:144.5px" width="20" height="20"><use href="#L_xpt"/></svg>
<div class="tri" style="left:26px;top:159.5px;border-left-width:5px;border-bottom-width:5px"></div>
<div class="a" style="left:6px;top:172px;width:20px;height:20px;background:#eeebdf"></div>
<svg class="ic" style="left:6px;top:172px" width="20" height="20"><use href="#L_line"/></svg>
<div class="tri" style="left:26px;top:187px;border-left-width:5px;border-bottom-width:5px"></div>
<div class="a" style="left:6px;top:199.5px;width:20px;height:20px;background:#eeebdf"></div>
<svg class="ic" style="left:6px;top:199.5px" width="20" height="20"><use href="#L_circle"/></svg>
<div class="tri" style="left:26px;top:214.5px;border-left-width:5px;border-bottom-width:5px"></div>
<div class="a" style="left:6px;top:227px;width:20px;height:20px;background:#eeebdf"></div>
<svg class="ic" style="left:6px;top:227px" width="20" height="20"><use href="#L_arc"/></svg>
<div class="tri" style="left:26px;top:242px;border-left-width:5px;border-bottom-width:5px"></div>
<div class="a" style="left:6px;top:255px;width:20px;height:20px;background:#eeebdf"></div>
<svg class="ic" style="left:6px;top:255px" width="20" height="20"><use href="#L_rect"/></svg>
<div class="tri" style="left:26px;top:270px;border-left-width:5px;border-bottom-width:5px"></div>
<div class="a" style="left:6px;top:282px;width:20px;height:20px;background:#eeebdf"></div>
<svg class="ic" style="left:6px;top:282px" width="20" height="20"><use href="#L_abc"/></svg>
<div class="tri" style="left:26px;top:297px;border-left-width:5px;border-bottom-width:5px"></div>
<div class="a" style="left:6px;top:309.5px;width:20px;height:20px;background:#eeebdf"></div>
<svg class="ic" style="left:6px;top:309.5px" width="20" height="20"><use href="#L_paint"/></svg>
<div class="tri" style="left:26px;top:324.5px;border-left-width:5px;border-bottom-width:5px"></div>
<div class="a" style="left:6px;top:337px;width:20px;height:20px;background:#eeebdf"></div>
<svg class="ic" style="left:6px;top:337px" width="20" height="20"><use href="#L_plusbox"/></svg>
<div class="tri" style="left:26px;top:352px;border-left-width:5px;border-bottom-width:5px"></div>
<div class="a" style="left:6px;top:364.5px;width:20px;height:20px;background:#eeebdf"></div>
<svg class="ic" style="left:6px;top:364.5px" width="20" height="20"><use href="#L_ruler"/></svg>
<div class="tri" style="left:26px;top:379.5px;border-left-width:5px;border-bottom-width:5px"></div>
<svg class="ic" style="left:6px;top:392px" width="20" height="20"><use href="#L_table"/></svg>
<div class="tri" style="left:26px;top:407px;border-left-width:5px;border-bottom-width:5px"></div>
<svg class="ic" style="left:6px;top:419.5px" width="20" height="20"><use href="#L_winmag"/></svg>
<div class="tri" style="left:26px;top:434.5px;border-left-width:5px;border-bottom-width:5px"></div>
<div class="a" style="left:6px;top:447px;width:20px;height:20px;background:#eeebdf"></div>
<svg class="ic" style="left:6px;top:447px" width="20" height="20"><use href="#L_shape"/></svg>
<div class="tri" style="left:26px;top:462px;border-left-width:5px;border-bottom-width:5px"></div>
<div class="a" style="left:6px;top:474.5px;width:20px;height:20px;background:#eeebdf"></div>
<svg class="ic" style="left:6px;top:474.5px" width="20" height="20"><use href="#L_imgpt"/></svg>
<div class="tri" style="left:26px;top:489.5px;border-left-width:5px;border-bottom-width:5px"></div>
<div class="a" style="left:6px;top:502px;width:20px;height:20px;background:#eeebdf"></div>
<svg class="ic" style="left:6px;top:502px" width="20" height="20"><use href="#L_move"/></svg>
<div class="tri" style="left:26px;top:517px;border-left-width:5px;border-bottom-width:5px"></div>
<div class="a" style="left:6px;top:529.5px;width:20px;height:20px;background:#eeebdf"></div>
<svg class="ic" style="left:6px;top:529.5px" width="20" height="20"><use href="#L_stake"/></svg>
<div class="tri" style="left:26px;top:544.5px;border-left-width:5px;border-bottom-width:5px"></div>
<div class="a" style="left:6px;top:557px;width:20px;height:20px;background:#eeebdf"></div>
<svg class="ic" style="left:6px;top:557px" width="20" height="20"><use href="#L_cline"/></svg>
<div class="tri" style="left:26px;top:572px;border-left-width:5px;border-bottom-width:5px"></div>
<div class="a" style="left:6px;top:584.5px;width:20px;height:20px;background:#eeebdf"></div>
<svg class="ic" style="left:6px;top:584.5px" width="20" height="20"><use href="#L_shield"/></svg>
<div class="tri" style="left:26px;top:599.5px;border-left-width:5px;border-bottom-width:5px"></div>
<div class="a" style="left:6px;top:612px;width:20px;height:20px;background:#eeebdf"></div>
<svg class="ic" style="left:6px;top:612px" width="20" height="20"><use href="#L_xpt2"/></svg>
<div class="tri" style="left:26px;top:627px;border-left-width:5px;border-bottom-width:5px"></div>
<div class="a" style="left:6px;top:655px;width:20px;height:20px;background:#eeebdf"></div>
<svg class="ic" style="left:6px;top:655px" width="20" height="20"><use href="#L_pwave"/></svg>
<div class="tri" style="left:26px;top:670px;border-left-width:5px;border-bottom-width:5px"></div>
<div class="a" style="left:6px;top:683.5px;width:20px;height:20px;background:#eeebdf"></div>
<svg class="ic" style="left:6px;top:683.5px" width="20" height="20"><use href="#L_kerb"/></svg>
<div class="tri" style="left:26px;top:698.5px;border-left-width:5px;border-bottom-width:5px"></div>
<div class="a" style="left:6px;top:711px;width:20px;height:20px;background:#eeebdf"></div>
<svg class="ic" style="left:6px;top:711px" width="20" height="20"><use href="#L_tin"/></svg>
<div class="tri" style="left:26px;top:726px;border-left-width:5px;border-bottom-width:5px"></div>
<div class="a" style="left:6px;top:739px;width:20px;height:20px;background:#eeebdf"></div>
<svg class="ic" style="left:6px;top:739px" width="20" height="20"><use href="#L_tin"/></svg>
<div class="tri" style="left:26px;top:754px;border-left-width:5px;border-bottom-width:5px"></div>
<svg class="ic" style="left:6px;top:711px" width="20" height="20"><g fill="#f8d048" opacity="0.9"><rect x="3" y="0" width="2" height="10"/><rect x="0" y="3.5" width="10" height="2"/><circle cx="4" cy="4.5" r="2.6" fill="#fff8c0"/></g></svg>
<svg class="ic" style="left:6px;top:739px" width="20" height="20"><rect x="1" y="6" width="3" height="3" rx="1" fill="#f0208a"/><rect x="1" y="10.5" width="3" height="3" rx="1" fill="#18a090"/><rect x="1" y="15" width="3" height="3" rx="1" fill="#f88840"/></svg>
<div class="vb" style="left:47.5px;top:111.5px"></div>
<svg class="ic" style="left:52.0px;top:116px" width="22" height="22"><use href="#V_grid"/></svg>
<div class="vb" style="left:80.0px;top:111.5px"></div>
<svg class="ic" style="left:84.5px;top:116px" width="22" height="22"><use href="#V_plus"/></svg>
<div class="vb pressed" style="left:112.5px;top:111.5px"></div>
<svg class="ic" style="left:117.0px;top:116px" width="22" height="22"><use href="#V_minus"/></svg>
<div class="vb" style="left:145.0px;top:111.5px"></div>
<svg class="ic" style="left:149.5px;top:116px" width="22" height="22"><use href="#V_zmove"/></svg>
<div class="vb" style="left:177.5px;top:111.5px"></div>
<svg class="ic" style="left:182.0px;top:116px" width="22" height="22"><use href="#V_hand"/></svg>
<div class="vb" style="left:210.0px;top:111.5px"></div>
<svg class="ic" style="left:214.5px;top:116px" width="22" height="22"><use href="#V_zplus"/></svg>
<div class="vb" style="left:242.5px;top:111.5px"></div>
<svg class="ic" style="left:247.0px;top:116px" width="22" height="22"><use href="#V_zred"/></svg>
<div class="vb" style="left:275.0px;top:111.5px"></div>
<svg class="ic" style="left:279.5px;top:116px" width="22" height="22"><use href="#V_zarrow"/></svg>
<div class="vb" style="left:307.5px;top:111.5px"></div>
<svg class="ic" style="left:312.0px;top:116px" width="22" height="22"><use href="#V_cross"/></svg>
<div class="vb" style="left:340.0px;top:111.5px"></div>
<svg class="ic" style="left:344.5px;top:116px" width="22" height="22"><use href="#V_brush"/></svg>
<div class="vb" style="left:372.5px;top:111.5px"></div>
<svg class="ic" style="left:377.0px;top:116px" width="22" height="22"><use href="#V_print"/></svg>
<div class="vb" style="left:405.0px;top:111.5px"></div>
<svg class="ic" style="left:409.5px;top:116px" width="22" height="22"><use href="#V_windows"/></svg>
<div class="vb" style="left:437.5px;top:111.5px"></div>
<svg class="ic" style="left:442.0px;top:116px" width="22" height="22"><use href="#V_gridbook"/></svg>
<div class="vb" style="left:470.0px;top:111.5px"></div>
<svg class="ic" style="left:474.5px;top:116px" width="22" height="22"><use href="#V_star"/></svg>
<div class="vb" style="left:502.5px;top:111.5px"></div>
<svg class="ic" style="left:507.0px;top:116px" width="22" height="22"><use href="#V_bstar"/></svg>
<div class="vb" style="left:535.0px;top:111.5px"></div>
<svg class="ic" style="left:539.5px;top:116px" width="22" height="22"><use href="#V_wgrid"/></svg>
<div class="a" style="left:469px;top:71.6px;width:20px;height:20px;background:#ece9d8"></div>
<svg class="ic" style="left:469.5px;top:71.8px" width="19.5" height="19.5"><use href="#L_cross"/></svg>
<div class="a" style="left:469px;top:71.6px;width:20px;height:20px;border:1.2px solid #2e90ff"></div>
<div class="tri" style="left:489.5px;top:86px;border-left-width:5px;border-bottom-width:5px"></div>
<div class="a" style="left:501.3px;top:71.6px;width:20px;height:20px;background:#ece9d8"></div>
<svg class="ic" style="left:501.8px;top:71.8px" width="19.5" height="19.5"><use href="#L_xpt"/></svg>
<div class="a" style="left:501.3px;top:71.6px;width:20px;height:20px;border:1.2px solid #2e90ff"></div>
<div class="tri" style="left:521.8px;top:86px;border-left-width:5px;border-bottom-width:5px"></div>
<div class="a" style="left:533.7px;top:71.6px;width:20px;height:20px;background:#ece9d8"></div>
<svg class="ic" style="left:534.2px;top:71.8px" width="19.5" height="19.5"><use href="#L_line"/></svg>
<div class="a" style="left:533.7px;top:71.6px;width:20px;height:20px;border:1.2px solid #2e90ff"></div>
<div class="tri" style="left:554.2px;top:86px;border-left-width:5px;border-bottom-width:5px"></div>
<div class="a" style="left:566.3px;top:71.6px;width:20px;height:20px;background:#ece9d8"></div>
<svg class="ic" style="left:566.8px;top:71.8px" width="19.5" height="19.5"><use href="#L_circle"/></svg>
<div class="a" style="left:566.3px;top:71.6px;width:20px;height:20px;border:1.2px solid #2e90ff"></div>
<div class="tri" style="left:586.8px;top:86px;border-left-width:5px;border-bottom-width:5px"></div>
<div class="a" style="left:599px;top:71.6px;width:20px;height:20px;background:#ece9d8"></div>
<svg class="ic" style="left:599.5px;top:71.8px" width="19.5" height="19.5"><use href="#L_arc"/></svg>
<div class="a" style="left:599px;top:71.6px;width:20px;height:20px;border:1.2px solid #2e90ff"></div>
<div class="tri" style="left:619.5px;top:86px;border-left-width:5px;border-bottom-width:5px"></div>
<svg class="ic" style="left:13px;top:4px" width="20" height="20"><use href="#app"/></svg>
<svg class="ic" style="left:132.2px;top:37.6px" width="18" height="18"><use href="#R_N"/></svg>
<svg class="ic" style="left:303.5px;top:36px" width="20" height="20"><use href="#layers"/></svg>
<svg class="ic" style="left:566px;top:35px" width="22" height="22"><use href="#R_z"/></svg>
<svg class="ic" style="left:711px;top:35px" width="22" height="22"><use href="#R_contour"/></svg>
<svg class="ic" style="left:800.5px;top:35px" width="22" height="22"><use href="#R_lines"/></svg>
<svg class="ic" style="left:903.5px;top:36.2px" width="22" height="22"><use href="#R_drop"/></svg>
<svg class="ic" style="left:933px;top:35px" width="22" height="22"><use href="#R_eye"/></svg>
<svg class="ic" style="left:856.5px;top:70.5px" width="24" height="24"><use href="#R_mag"/></svg>
<svg class="ic" style="left:902px;top:72px" width="22" height="22"><use href="#R_folder1"/></svg>
<div class="tri" style="left:922px;top:87px;border-left-width:5px;border-bottom-width:5px"></div>
<svg class="ic" style="left:935px;top:72px" width="22" height="22"><use href="#R_folder2"/></svg>
<div class="tri" style="left:955px;top:87px;border-left-width:5px;border-bottom-width:5px"></div>
<svg class="ic" style="left:967px;top:72px" width="22" height="22"><use href="#R_folder2"/></svg>

<!-- canvas polygon -->
<svg class="a" style="left:0;top:0" width="975" height="782" viewBox="0 0 975 782">
<polygon points="604.5,194.5 927,523 773,673 451,344.5" fill="none" stroke="#3434d6" stroke-width="2.8"/>
<g stroke="#c02cf0" stroke-width="1.6">
<path d="M598.5 194.5h12M604.5 188.5v12"/>
<path d="M444.5 344.5h12M450.5 338.5v12"/>
<path d="M767 673h12M773 667v12"/>
<path d="M921 523h12M927 517v12"/>
</g>
</svg>

<!-- ============ DIALOG ============ -->
<div class="a" style="left:64px;top:168px;width:353px;height:180px;background:#f0f0f0;border:1px solid #7a7674;box-shadow:inset 1px -1px 0 #fff,0 2px 9px 1px rgba(0,0,0,0.26)"></div>
<div class="a" style="left:64px;top:168px;width:353px;height:39px;background:#797473"></div>
<div class="a" style="left:100.5px;top:179px;color:#fff;font-size:15px;line-height:18px;white-space:nowrap">Add Model to a Vi...</div>
<div class="a" style="left:262.5px;top:187px;width:13px;height:1px;background:#fff"></div>
<div class="a" style="left:321px;top:182px;width:12.5px;height:12px;border:1px solid #9a9594"></div>
<svg class="a" style="left:379px;top:181.5px" width="14" height="14"><path d="M1 1L13 13M13 1L1 13" stroke="#fff" stroke-width="1.2"/></svg>

<div class="t" style="left:69.6px;top:214px;transform:scaleX(1.085);transform-origin:0 0">Model</div>
<div class="t" style="left:70.3px;top:243px;transform:scaleX(1.033);transform-origin:0 0">Add to view</div>
<div class="inp" style="left:161.5px;top:213.5px;width:216px;height:22px"></div>
<div class="t" style="left:164.8px;top:217.5px">Design Pad</div>
<div class="inp" style="left:161.5px;top:242px;width:216px;height:22px"></div>
<div class="t" style="left:164.8px;top:246px;transform:scaleX(0.9);transform-origin:0 0">DESIGN</div>
<div class="rb" style="left:382px;top:212px;width:29.5px;height:25.5px;background:#ece9df"></div>
<div class="rb" style="left:382px;top:241px;width:29.5px;height:25.5px;background:#ece9df"></div>
<div class="a" style="left:71.5px;top:271.5px;width:338px;height:21.5px;background:#f0f0f0;box-shadow:inset 1px 1px 0 #a0a0a0,inset 2px 2px 0 #8a8a8a,inset -1px -1px 0 #fff"></div>
<div class="t" style="left:78.6px;top:275px;transform:scaleX(1.025);transform-origin:0 0">model added to view</div>
<div class="a" style="left:116px;top:299px;width:49px;height:27.5px;border:4px solid #525aa8;background:#f8f8f8"></div>
<div class="t" style="left:128px;top:305px">Add</div>
<div class="rb" style="left:215px;top:301px;width:47.5px;height:25.5px"></div>
<div class="t" style="left:219px;top:305px">Finish</div>
<div class="rb" style="left:312.5px;top:301px;width:47px;height:25.5px"></div>
<div class="t" style="left:321px;top:305px">Help</div>

<!-- ============ CALLOUTS ============ -->
<svg class="a" style="left:0;top:0" width="975" height="782" viewBox="0 0 975 782">
<path d="M436 237 H623.5 V302 H436 V269.5 L410 255 L436 247 Z" fill="#fff" stroke="#5a5ea8" stroke-width="2"/>
<path d="M78.5 358 H110.8 L140.4 327.6 L172 358 H266.9 V424.2 H78.5 Z" fill="#fff" stroke="#5a5ea8" stroke-width="2"/>
<path d="M300 481 H420 L525 425 L497.5 481 H536 V526.5 H300 Z" fill="#fff" stroke="#5a5ea8" stroke-width="2"/>
</svg>
<div class="co" style="left:434.8px;top:240px;width:188px">Hit the <b>&lt;View&gt;</b> button to<br>select the 'DESIGN' view<br>from the drop down list</div>
<div class="co" style="left:77.7px;top:362px;width:188px">Hit the <b>&lt;Add&gt;</b> button to<br>add the selected model<br>onto the Design View</div>
<div class="co" style="left:299px;top:484px;width:236px"><span style="letter-spacing:0.14px">Here is the 'Design Pad' model</span><br><span style="letter-spacing:0.09px">added to the Design View</span></div>

<!-- ============ TAB BAR ============ -->
<div class="a" style="left:38px;top:697px;width:937px;height:30px;background:#f7f7f7"></div>
<div class="a" style="left:128px;top:697px;width:90px;height:28px;background:#f7f7f7;box-shadow:inset -1px -1px 0 #444,inset -2px -2px 0 #a0a0a0,inset 1px 0 0 #fff"></div>
<div class="t" style="left:67.7px;top:703px;color:#a0a0a0;transform:scaleX(0.853);transform-origin:0 0">SURVEY</div>
<div class="t" style="left:156px;top:703px;font-weight:bold">DESIGN</div>
<div class="t" style="left:246px;top:703px;color:#a0a0a0;transform:scaleX(0.83);transform-origin:0 0">LS</div>
<div class="a" style="left:269px;top:702px;width:1px;height:18px;background:#a0a0a0"></div>
<div class="t" style="left:297.8px;top:703px;color:#a0a0a0;transform:scaleX(0.83);transform-origin:0 0">XS</div>
<div class="a" style="left:321.5px;top:702px;width:1px;height:18px;background:#a0a0a0"></div>
<div class="t" style="left:349.5px;top:703px;color:#a0a0a0;transform:scaleX(0.88);transform-origin:0 0">3D</div>
<div class="a" style="left:375.5px;top:702px;width:1px;height:18px;background:#a0a0a0"></div>
<div class="t" style="left:405px;top:703px;color:#a0a0a0">1</div>
<div class="a" style="left:419.5px;top:702px;width:1px;height:18px;background:#a0a0a0"></div>
<div class="t" style="left:447.5px;top:703px;color:#a0a0a0;transform:scaleX(0.97);transform-origin:0 0">DATA IMPORT</div>
<div class="a" style="left:552.5px;top:702px;width:1px;height:18px;background:#a0a0a0"></div>

<!-- ============ STATUS ============ -->
<div class="a" style="left:38px;top:727px;width:937px;height:27px;background:#efefef"></div>
<div class="t" style="left:42.5px;top:734px;transform:scaleX(0.97);transform-origin:0 0">For Help, press F1</div>
<div class="a" style="left:38px;top:754px;width:937px;height:28px;background:#f7f7f7"></div>
<div class="a" style="left:42.5px;top:756px;width:166px;height:26px;background:#52a3e3"></div>
<div class="t" style="left:49px;top:762px;color:#6f7c88;transform:scaleX(1.06);transform-origin:0 0">Output Window</div>
<div class="a" style="left:226px;top:756px;width:176px;height:26px;background:#efefef;border:1px solid #a8a8a8;border-bottom:0"></div>
<div class="t" style="left:233px;top:762px;color:#6a6a6a">Background tasks</div>

<svg class="ic" style="left:45.2px;top:700.8px" width="20" height="20"><use href="#app"/></svg>
<svg class="ic" style="left:132.7px;top:700.8px" width="20" height="20"><use href="#app"/></svg>
<svg class="ic" style="left:224px;top:700.8px" width="20" height="20"><use href="#wave"/></svg>
<svg class="ic" style="left:275px;top:700.8px" width="20" height="20"><use href="#wave"/></svg>
<svg class="ic" style="left:327.3px;top:700.8px" width="20" height="20"><use href="#d3"/></svg>
<svg class="ic" style="left:381.3px;top:700.8px" width="20" height="20"><use href="#app"/></svg>
<svg class="ic" style="left:425px;top:700.8px" width="20" height="20"><use href="#app"/></svg>
<svg class="ic" style="left:77px;top:177.5px" width="16" height="19"><use href="#cube"/></svg>
<svg class="ic" style="left:386.5px;top:214.5px" width="20" height="20"><use href="#layers"/></svg>
<svg class="ic" style="left:388.3px;top:245.8px" width="18" height="15"><use href="#imgbtn"/></svg>
<svg class="ic" style="left:402px;top:333px" width="13" height="13"><path d="M12 3L3 12M12 7L7 12M12 11L11 12" stroke="#a0a0a0" stroke-width="1.2"/></svg>
</body></html>
